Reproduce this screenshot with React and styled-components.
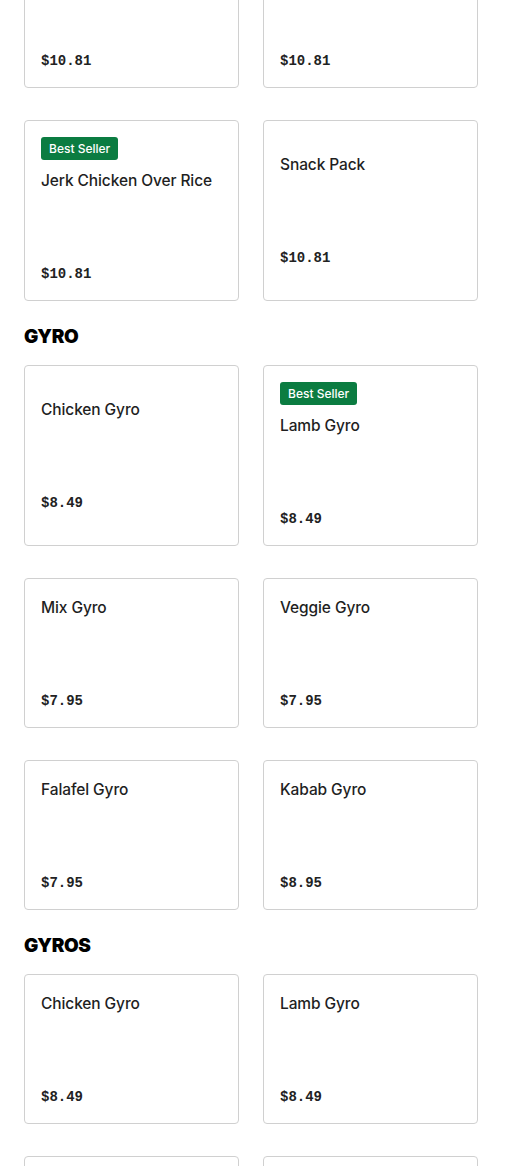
import React from 'react'
import styled, { createGlobalStyle } from 'styled-components'

const GlobalStyle = createGlobalStyle`
    body {
        margin: 0;
        background: #ffffff;
        font-family: Inter, "Noto Sans", sans-serif;
        color: #191919;
    }
`

const Page = styled.div`
    padding: 0 24px;
    margin-top: -62px;
`

const Section = styled.section`
    & + & {
        margin-top: 24px;
    }
`

const Heading = styled.h2`
    margin: 0 0 16px;
    font-size: 19px;
    line-height: 24px;
    font-weight: 900;
    letter-spacing: -0.4px;
    color: #000;
`

const Grid = styled.div`
    display: grid;
    grid-template-columns: 215px 215px;
    column-gap: 24px;
    row-gap: 32px;
`

const Card = styled.div`
    box-sizing: border-box;
    border: 1px solid #d0d0d0;
    border-radius: 4px;
    padding: 16px;
    display: flex;
    flex-direction: column;
    justify-content: center;
    min-height: 150px;
`

const Badge = styled.span`
    align-self: flex-start;
    height: 23px;
    line-height: 23px;
    padding: 0 8px;
    border-radius: 3px;
    background: #0b7c41;
    color: #fff;
    font-size: 12px;
    font-weight: 500;
    margin-bottom: 9px;
`

const Title = styled.div`
    font-size: 15.5px;
    line-height: 24px;
    font-weight: 500;
    letter-spacing: -0.1px;
    color: #1f1f1f;
`

const Price = styled.div`
    margin-top: 71px;
    font-family: "Liberation Mono", monospace;
    font-size: 14px;
    line-height: 20px;
    font-weight: 700;
    color: #222;
`

const sections = [
    {
        items: [
            { name: 'Chicken Over Rice', price: '$10.81' },
            { name: 'Lamb Over Rice', price: '$10.81' },
            { name: 'Jerk Chicken Over Rice', price: '$10.81', best: true },
            { name: 'Snack Pack', price: '$10.81' },
        ],
    },
    {
        title: 'GYRO',
        items: [
            { name: 'Chicken Gyro', price: '$8.49' },
            { name: 'Lamb Gyro', price: '$8.49', best: true },
            { name: 'Mix Gyro', price: '$7.95' },
            { name: 'Veggie Gyro', price: '$7.95' },
            { name: 'Falafel Gyro', price: '$7.95' },
            { name: 'Kabab Gyro', price: '$8.95' },
        ],
    },
    {
        title: 'GYROS',
        items: [
            { name: 'Chicken Gyro', price: '$8.49' },
            { name: 'Lamb Gyro', price: '$8.49' },
            { name: 'Mix Gyro', price: '$7.95' },
            { name: 'Veggie Gyro', price: '$7.95' },
        ],
    },
]

export default function App() {
    return (
        <Page>
            <GlobalStyle />
            {sections.map((section, i) => (
                <Section key={i}>
                    {section.title && <Heading>{section.title}</Heading>}
                    <Grid>
                        {section.items.map((item, j) => (
                            <Card key={j}>
                                {item.best && <Badge>Best Seller</Badge>}
                                <Title>{item.name}</Title>
                                <Price>{item.price}</Price>
                            </Card>
                        ))}
                    </Grid>
                </Section>
            ))}
        </Page>
    )
}
